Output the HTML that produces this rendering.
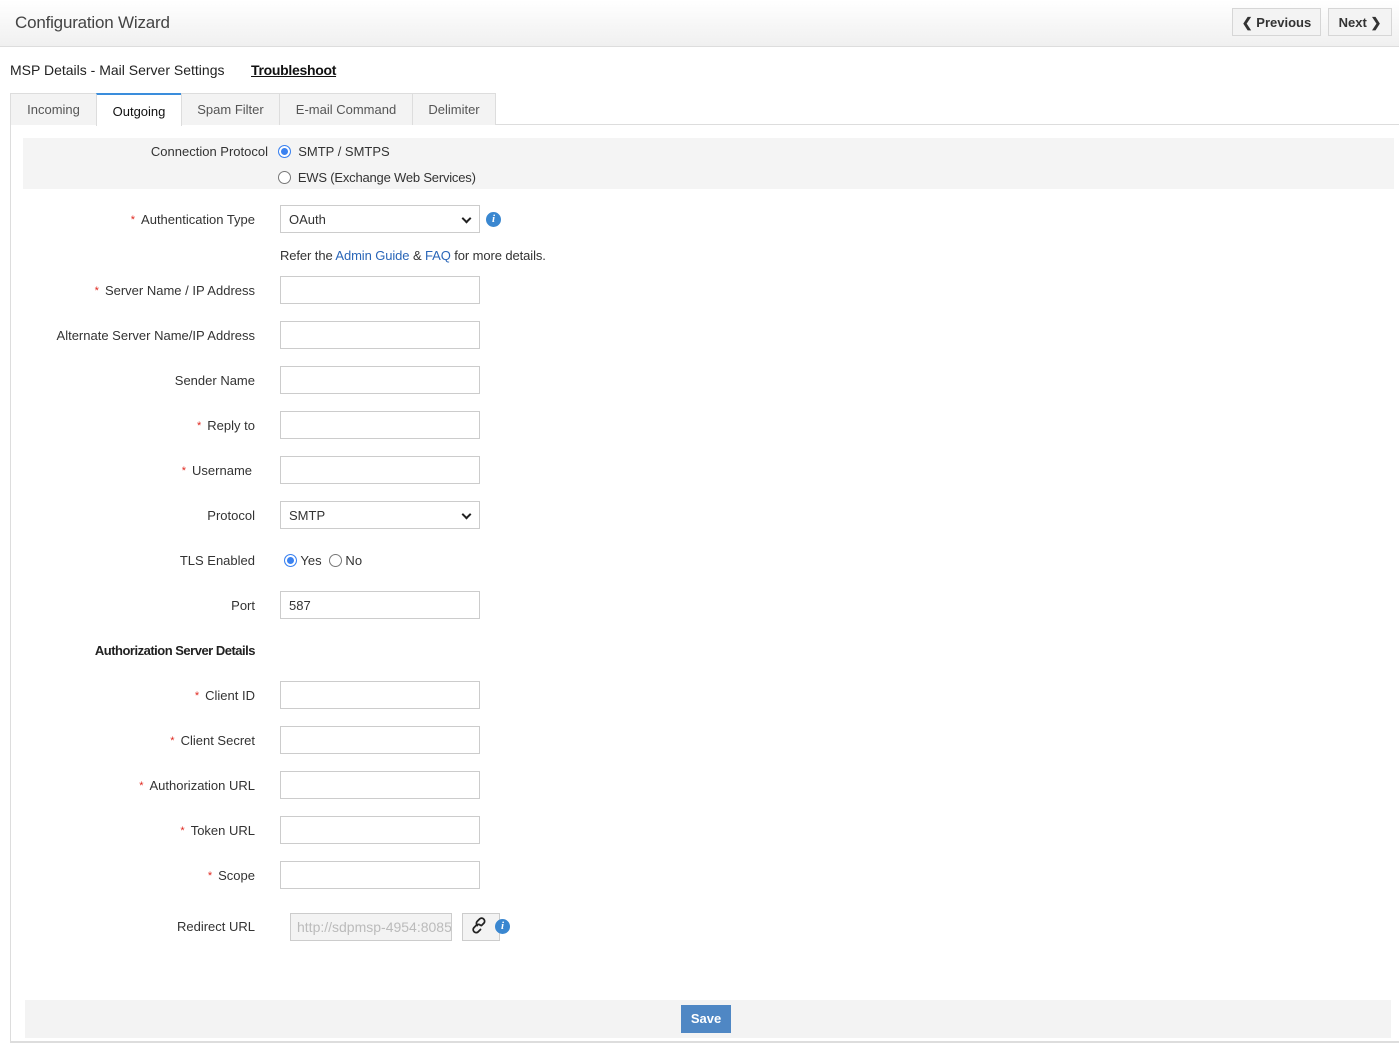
<!DOCTYPE html>
<html><head><meta charset="utf-8"><style>
*{box-sizing:border-box;margin:0;padding:0}
body{width:1399px;height:1046px;position:relative;background:#fff;font-family:"Liberation Sans",sans-serif;font-size:13px;color:#333;overflow:hidden}
.a{position:absolute}
.hdr{left:0;top:0;width:1399px;height:47px;background:linear-gradient(#fff,#f0f0f0);border-bottom:1px solid #ddd}
.btn{position:absolute;top:8px;height:28px;border:1px solid #d6d6d6;background:#f3f3f3;font-size:13px;font-weight:bold;color:#333;line-height:27px;text-align:center}
.tab{position:absolute;top:93px;height:32px;border:1px solid #ddd;border-bottom:none;background:#f3f3f3;line-height:32px;text-align:center;color:#555;font-size:13px}
.lbl{position:absolute;right:1144px;text-align:right;white-space:nowrap;line-height:16px}
.req:before{content:"*";color:#e0281f;margin-right:6px;font-size:11px;position:relative;top:-1px}
.inp{position:absolute;left:280px;width:200px;height:28px;border:1px solid #ccc;background:#fff;padding-left:8px;line-height:27px}
.sel:after{content:"";position:absolute;right:9px;top:9px;width:5px;height:5px;border-right:2px solid #222;border-bottom:2px solid #222;transform:rotate(45deg)}
.rad{display:inline-block;width:13px;height:13px;border-radius:50%;border:1px solid #777;background:#fff;vertical-align:-2px}
.rad.on{border:1px solid #3b82f0;box-shadow:inset 0 0 0 2px #fff;background:#3b82f0}
.info{position:absolute;width:15px;height:15px;border-radius:50%;background:#3a87d0;color:#fff;font:italic bold 11px "Liberation Serif",serif;text-align:center;line-height:15px}
a{color:#2a66b8;text-decoration:none}
</style></head><body>
<div class="a hdr"></div>
<div class="a" style="left:15px;top:13px;font-size:17px;color:#444;letter-spacing:-0.2px">Configuration Wizard</div>
<div class="btn" style="left:1232px;width:89px">&#10094;&nbsp;Previous</div>
<div class="btn" style="left:1328px;width:64px">Next&nbsp;&#10095;</div>

<div class="a" style="left:10px;top:62px;font-size:14px;color:#222">MSP Details - Mail Server Settings</div>
<div class="a" style="left:251px;top:62px;font-size:14px;font-weight:bold;color:#111;text-decoration:underline;letter-spacing:-0.3px">Troubleshoot</div>

<div class="a" style="left:10px;top:124px;width:1389px;border-top:1px solid #ddd"></div>
<div class="tab" style="left:10px;width:87px">Incoming</div>
<div class="tab" style="left:96px;width:86px;background:#fff;border-top:2px solid #3a8ddc;color:#111;height:33px;line-height:33px">Outgoing</div>
<div class="tab" style="left:181px;width:99px">Spam Filter</div>
<div class="tab" style="left:279px;width:134px">E-mail Command</div>
<div class="tab" style="left:412px;width:84px">Delimiter</div>
<div class="a" style="left:10px;top:125px;height:918px;border-left:1px solid #ddd"></div>
<div class="a" style="left:10px;top:1041px;width:1389px;border-top:2px solid #ddd"></div>

<div class="a" style="left:23px;top:138px;width:1371px;height:51px;background:#f4f4f4"></div>
<div class="lbl" style="right:1131px;top:144px">Connection Protocol</div>
<div class="a" style="left:278px;top:144px"><span class="rad on"></span>&nbsp; SMTP / SMTPS</div>
<div class="a" style="left:278px;top:170px;letter-spacing:-0.2px"><span class="rad"></span>&nbsp; EWS (Exchange Web Services)</div>

<div class="lbl req" style="top:212px">Authentication Type</div>
<div class="inp sel" style="top:205px">OAuth</div>
<div class="info" style="left:486px;top:212px">i</div>
<div class="a" style="left:280px;top:248px;letter-spacing:-0.1px">Refer the <a>Admin Guide</a> &amp; <a>FAQ</a> for more details.</div>

<div class="lbl req" style="top:283px">Server Name / IP Address</div><div class="inp" style="top:276px"></div>
<div class="lbl" style="top:328px">Alternate Server Name/IP Address</div><div class="inp" style="top:321px"></div>
<div class="lbl" style="top:373px">Sender Name</div><div class="inp" style="top:366px"></div>
<div class="lbl req" style="top:418px">Reply to</div><div class="inp" style="top:411px"></div>
<div class="lbl req" style="top:463px;right:1147px">Username</div><div class="inp" style="top:456px"></div>
<div class="lbl" style="top:508px">Protocol</div><div class="inp sel" style="top:501px">SMTP</div>
<div class="lbl" style="top:553px">TLS Enabled</div>
<div class="a" style="left:284px;top:553px"><span class="rad on"></span> Yes &nbsp;<span class="rad"></span> No</div>
<div class="lbl" style="top:598px">Port</div><div class="inp" style="top:591px">587</div>
<div class="lbl" style="top:643px;font-weight:bold;color:#222;letter-spacing:-0.5px">Authorization Server Details</div>
<div class="lbl req" style="top:688px">Client ID</div><div class="inp" style="top:681px"></div>
<div class="lbl req" style="top:733px">Client Secret</div><div class="inp" style="top:726px"></div>
<div class="lbl req" style="top:778px">Authorization URL</div><div class="inp" style="top:771px"></div>
<div class="lbl req" style="top:823px">Token URL</div><div class="inp" style="top:816px"></div>
<div class="lbl req" style="top:868px">Scope</div><div class="inp" style="top:861px"></div>
<div class="lbl" style="top:919px">Redirect URL</div>
<div class="inp" style="left:290px;width:162px;top:913px;background:#f3f3f3;color:#bbb;overflow:hidden;white-space:nowrap;padding-left:6px;font-size:14px">http://sdpmsp-4954:8085</div>
<div class="a" style="left:462px;top:913px;width:38px;height:28px;border:1px solid #ccc;background:#f3f3f3">
<svg width="38" height="28" viewBox="0 0 38 28" style="position:absolute;left:-1px;top:-1px"><g fill="none" stroke="#222" stroke-width="1.8" stroke-linecap="round"><path d="M18.5 16.5l-2.5 2.5a3 3 0 0 1-4.2-4.2l2.5-2.5a3 3 0 0 1 4.2 0"/><path d="M19.5 12.5l2.5-2.5a3 3 0 0 0-4.2-4.2l-2.5 2.5a3 3 0 0 0 0 4.2"/></g></svg></div>
<div class="info" style="left:495px;top:919px">i</div>

<div class="a" style="left:25px;top:1000px;width:1366px;height:38px;background:#f3f3f3"></div>
<div class="a" style="left:681px;top:1005px;width:50px;height:28px;background:#4f87c4;color:#fff;font-weight:bold;font-size:13px;text-align:center;line-height:28px">Save</div>
</body></html>
